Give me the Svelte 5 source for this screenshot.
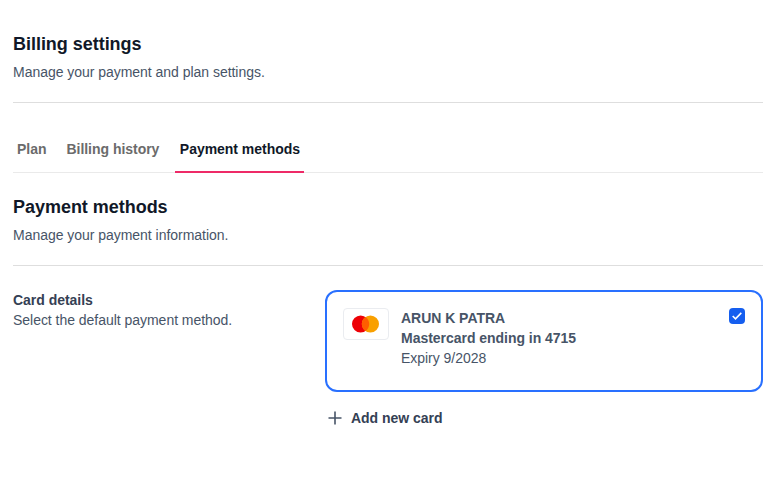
<script>
  const tabs = ['Plan', 'Billing history', 'Payment methods'];
  let active = $state('Payment methods');
  let selected = $state(true);
</script>

<main>
  <header class="section">
    <h1>Billing settings</h1>
    <p>Manage your payment and plan settings.</p>
  </header>

  <nav>
    {#each tabs as tab}
      <button class="tab" class:active={tab === active} onclick={() => (active = tab)}>{tab}</button>
    {/each}
  </nav>

  <header class="section second">
    <h2>Payment methods</h2>
    <p>Manage your payment information.</p>
  </header>

  <section class="details">
    <div class="label">
      <strong>Card details</strong>
      <span>Select the default payment method.</span>
    </div>

    <div class="cards">
      <div class="card">
        <div class="brand">
          <svg width="28" height="18" viewBox="0 0 28 18" aria-label="Mastercard">
            <circle cx="8.6" cy="9" r="8.6" fill="#ed0006" />
            <circle cx="18.4" cy="9" r="8.6" fill="#f9a000" />
            <path d="M13.5 1.93a8.6 8.6 0 0 1 0 14.14a8.6 8.6 0 0 1 0-14.14Z" fill="#ff5e00" />
          </svg>
        </div>
        <div class="info">
          <strong>ARUN K PATRA</strong>
          <strong>Mastercard ending in 4715</strong>
          <span>Expiry 9/2028</span>
        </div>
        <button class="check" aria-label="Default card" onclick={() => (selected = !selected)}>
          {#if selected}
            <svg width="16" height="16" viewBox="0 0 16 16" fill="none">
              <path d="M3.7 8 6.5 10.8 12.3 4.9" stroke="#fff" stroke-width="1.6" />
            </svg>
          {/if}
        </button>
      </div>

      <button class="add">
        <svg width="14" height="14" viewBox="0 0 14 14" fill="none">
          <path d="M7 .5v13M.5 7h13" stroke="#475467" stroke-width="1.6" />
        </svg>
        Add new card
      </button>
    </div>
  </section>
</main>

<style>
  :global(body) {
    background: #fff;
  }
  main {
    box-sizing: border-box;
    padding: 30px 19px 0 13px;
    font: 14px/20px 'Liberation Sans', Arial, sans-serif;
    letter-spacing: -0.03px;
    color: #475467;
  }
  h1,
  h2 {
    margin: 0;
    font-size: 18px;
    line-height: 28px;
    font-weight: 700;
    color: #101828;
  }
  p {
    margin: 4px 0 0;
  }
  .section {
    padding-bottom: 20px;
    border-bottom: 1px solid #dedede;
  }
  .section.second {
    margin-top: 20px;
  }
  button {
    margin: 0;
    padding: 0;
    border: 0;
    background: none;
    font: inherit;
    letter-spacing: inherit;
    cursor: pointer;
  }
  nav {
    display: flex;
    gap: 12px;
    height: 34px;
    margin-top: 36px;
    box-shadow: inset 0 -1px #eaeaea;
  }
  .tab {
    padding: 0 4px 12px;
    border-bottom: 2px solid transparent;
    font-weight: 700;
    color: #6b6b6b;
  }
  .tab.active {
    padding-left: 4.5px;
    color: #101828;
    border-color: #ee2a67;
  }
  .details {
    display: flex;
    gap: 32px;
    padding-top: 24px;
  }
  .label {
    display: flex;
    flex-direction: column;
    width: 280px;
  }
  .label strong {
    color: #344054;
  }
  .cards {
    flex: 1;
  }
  .card {
    box-sizing: border-box;
    display: flex;
    height: 102px;
    padding: 16px;
    border: 2px solid #2970ff;
    border-radius: 12px;
  }
  .brand {
    box-sizing: border-box;
    display: flex;
    align-items: center;
    justify-content: center;
    width: 46px;
    height: 32px;
    border: 1px solid #eaecf0;
    border-radius: 4px;
  }
  .info {
    display: flex;
    flex: 1;
    flex-direction: column;
    margin-left: 12px;
  }
  .check {
    width: 16px;
    height: 16px;
    border-radius: 4px;
    background: #155eef;
  }
  .check svg {
    display: block;
  }
  .add {
    display: flex;
    align-items: center;
    gap: 9px;
    margin-top: 16px;
    padding-left: 3px;
    font-weight: 700;
    color: #344054;
  }
</style>
